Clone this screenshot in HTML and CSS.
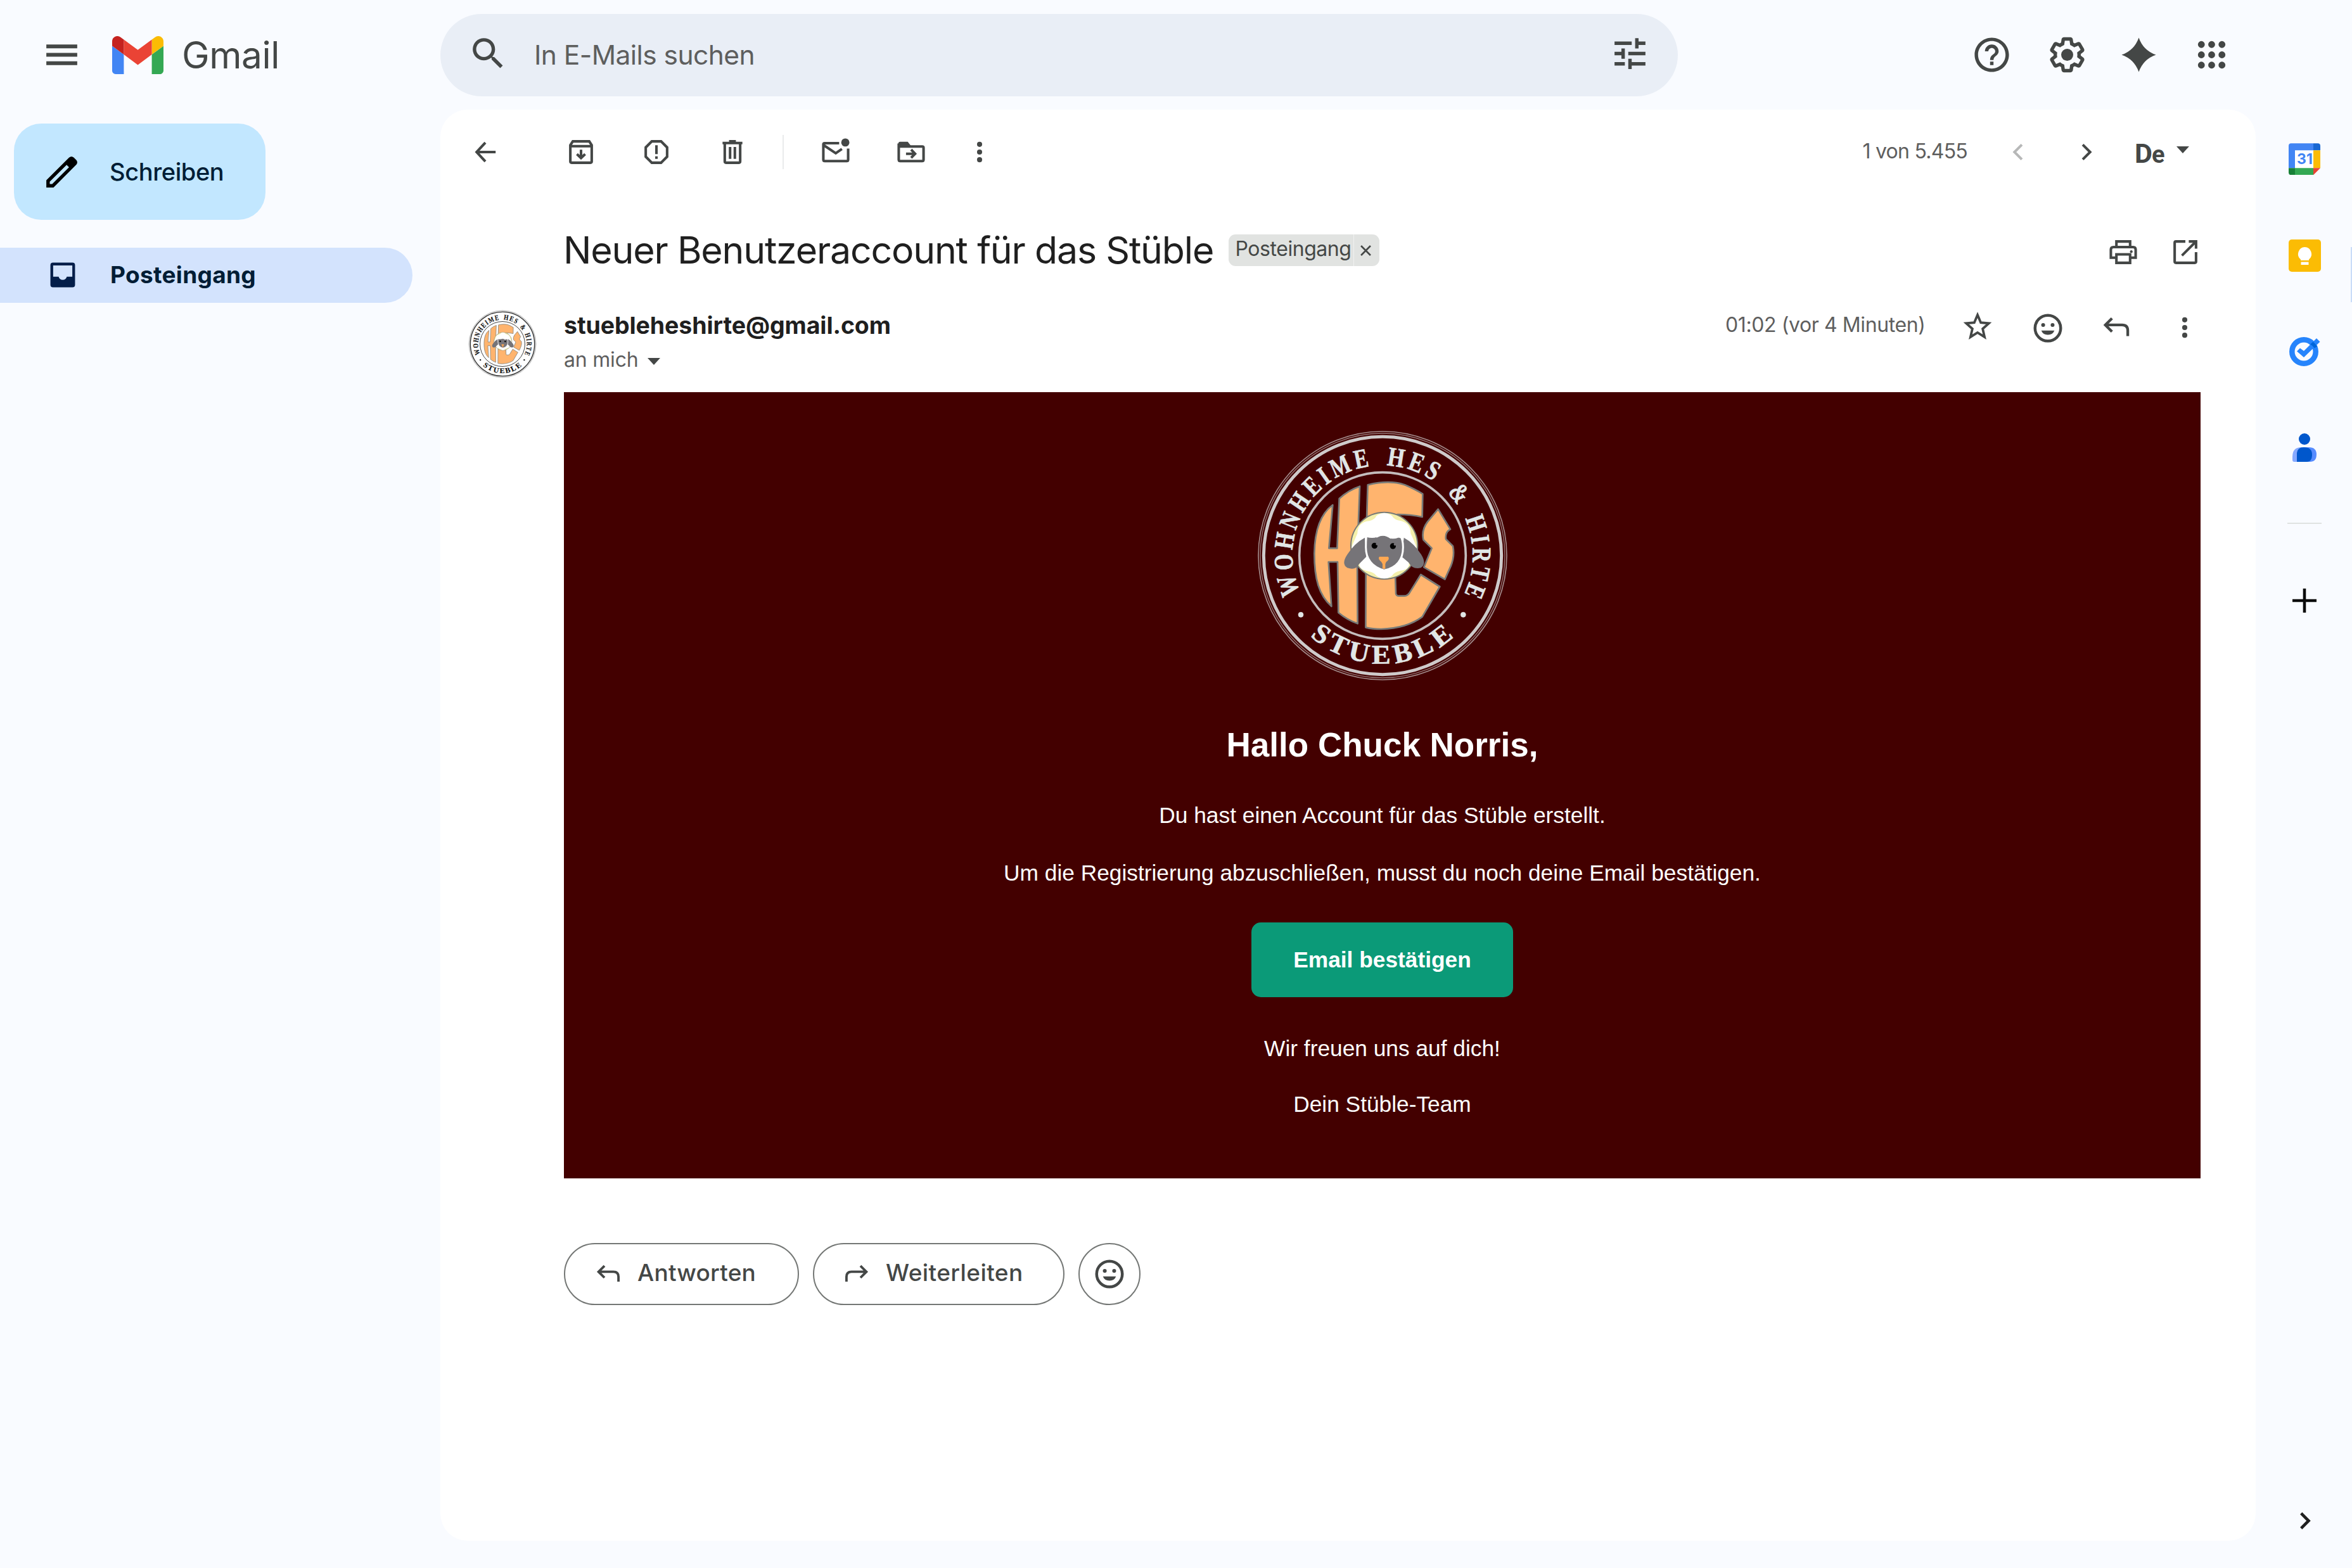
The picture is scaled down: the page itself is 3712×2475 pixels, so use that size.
FILE: index.html
```html
<!DOCTYPE html>
<html lang="de">
<head>
<meta charset="utf-8">
<title>Gmail</title>
<link rel="stylesheet" href="styles.css">
</head>
<body>
<svg class="defs" aria-hidden="true">
  <symbol id="smile" viewBox="0 0 24 24">
    <circle cx="12" cy="12" r="9" fill="none" stroke="currentColor" stroke-width="2"/>
    <circle cx="8.7" cy="9.8" r="1.35"/><circle cx="15.3" cy="9.8" r="1.35"/>
    <path d="M7.4 13.7H16.6A4.9 4.6 0 0 1 7.4 13.7Z"/>
  </symbol>
  <symbol id="reply" viewBox="0 0 20 20">
    <path fill="none" stroke="currentColor" stroke-width="1.6" d="M7.5 4.6L3.6 8.5L7.5 12.4M3.8 8.5H13.4Q16.7 8.5 16.7 11.8V15"/>
  </symbol>
  <symbol id="dots" viewBox="0 0 20 20">
    <circle cx="10" cy="5.5" r="1.5"/><circle cx="10" cy="10" r="1.5"/><circle cx="10" cy="14.5" r="1.5"/>
  </symbol>
</svg>

<div class="app">
  <header class="header">
    <div class="brand">
      <svg class="ic24" viewBox="0 0 24 24"><path d="M3 18h18v-2.2H3zM3 13.1h18v-2.2H3zM3 6v2.2h18V6z"/></svg>
      <svg class="logo" viewBox="52 42 88 66" preserveAspectRatio="none"><path fill="#4285f4" d="M58 108h14V74L52 59v43c0 3.32 2.69 6 6 6"/><path fill="#34a853" d="M120 108h14c3.32 0 6-2.69 6-6V59l-20 15"/><path fill="#fbbc04" d="M120 48v26l20-15v-8c0-7.42-8.47-11.65-14.4-7.2"/><path fill="#ea4335" d="M72 74V48l24 18 24-18v26L96 92"/><path fill="#c5221f" d="M52 51v8l20 15V48l-5.600-4.200c-5.940-4.450-14.400-.22-14.400 7.200"/></svg>
      <span class="brand-name">Gmail</span>
    </div>
    <div class="search">
      <svg class="ic24" viewBox="0 0 24 24"><path d="M15.500 14h-.79l-.28-.27A6.470 6.470 0 0 0 16 9.500 6.500 6.500 0 1 0 9.500 16c1.610 0 3.090-.59 4.230-1.570l.27.28v.79l5 4.990L20.490 19l-4.990-5zm-6 0C7.010 14 5 11.990 5 9.500S7.010 5 9.500 5 14 7.010 14 9.500 11.990 14 9.500 14z"/></svg>
      <span class="search-text">In E-Mails suchen</span>
      <svg class="ic24" viewBox="0 0 24 24"><path d="M3 17v2h6v-2H3zM3 5v2h10V5H3zm10 16v-2h8v-2h-8v-2h-2v6h2zM7 9v2H3v2h4v2h2V9H7zm14 4v-2H11v2h10zm-6-4h2V7h4V5h-4V3h-2v6z"/></svg>
    </div>
    <nav class="header-tools">
      <svg class="ic24" viewBox="0 0 24 24"><path d="M11 18h2v-2h-2v2zm1-16C6.480 2 2 6.480 2 12s4.480 10 10 10 10-4.480 10-10S17.520 2 12 2zm0 18c-4.410 0-8-3.590-8-8s3.590-8 8-8 8 3.590 8 8-3.590 8-8 8zm0-14c-2.210 0-4 1.790-4 4h2c0-1.100.9-2 2-2s2 .9 2 2c0 2-3 1.750-3 5h2c0-2.250 3-2.500 3-5 0-2.210-1.790-4-4-4z"/></svg>
      <svg class="ic24" viewBox="0 0 24 24"><path d="M13.850 22.250h-3.700c-.74 0-1.360-.54-1.450-1.270l-.27-1.890c-.27-.14-.53-.29-.79-.46l-1.800.72c-.7.26-1.470-.03-1.810-.65L2.200 15.530c-.35-.66-.2-1.440.36-1.880l1.530-1.190c-.01-.15-.02-.3-.02-.46 0-.15.01-.31.02-.46l-1.520-1.190c-.59-.45-.74-1.260-.37-1.880l1.850-3.190c.34-.62 1.110-.9 1.790-.63l1.810.73c.26-.17.520-.32.78-.46l.27-1.910c.09-.7.710-1.250 1.440-1.250h3.700c.74 0 1.360.54 1.450 1.270l.27 1.890c.27.14.53.29.79.46l1.800-.72c.71-.26 1.480.03 1.820.65l1.840 3.180c.36.66.2 1.440-.36 1.880l-1.520 1.190c.01.15.02.3.02.46s-.01.31-.02.46l1.520 1.190c.56.45.72 1.230.37 1.860l-1.860 3.220c-.34.62-1.110.9-1.800.63l-1.800-.72c-.26.17-.52.32-.78.46l-.27 1.910c-.1.68-.72 1.220-1.460 1.220zm-3.230-2h2.760l.37-2.550.53-.22c.44-.18.88-.44 1.340-.78l.45-.34 2.380.96 1.380-2.400-2.030-1.580.07-.56c.03-.26.06-.51.06-.78s-.03-.53-.06-.78l-.07-.56 2.030-1.580-1.390-2.400-2.390.96-.45-.35c-.42-.32-.87-.58-1.330-.77l-.52-.22-.37-2.550h-2.760l-.37 2.550-.53.21c-.44.19-.88.44-1.340.79l-.45.33-2.380-.95-1.390 2.390 2.030 1.580-.07.56a7 7 0 0 0-.06.79c0 .26.02.53.06.78l.07.56-2.030 1.580 1.380 2.400 2.390-.96.45.35c.43.33.86.58 1.330.77l.53.22.38 2.550z"/><circle cx="12" cy="12" r="3.500"/></svg>
      <svg class="ic24" viewBox="0 0 24 24"><path d="M12 2Q14.600 9.400 22 12Q14.600 14.600 12 22Q9.400 14.600 2 12Q9.400 9.400 12 2Z"/></svg>
      <svg class="ic24" viewBox="0 0 24 24"><path d="M6 8a2 2 0 1 0 0-4 2 2 0 0 0 0 4zm6 0a2 2 0 1 0 0-4 2 2 0 0 0 0 4zm6 0a2 2 0 1 0 0-4 2 2 0 0 0 0 4zM6 14a2 2 0 1 0 0-4 2 2 0 0 0 0 4zm6 0a2 2 0 1 0 0-4 2 2 0 0 0 0 4zm6 0a2 2 0 1 0 0-4 2 2 0 0 0 0 4zM6 20a2 2 0 1 0 0-4 2 2 0 0 0 0 4zm6 0a2 2 0 1 0 0-4 2 2 0 0 0 0 4zm6 0a2 2 0 1 0 0-4 2 2 0 0 0 0 4z"/></svg>
    </nav>
  </header>

  <aside class="sidebar">
    <button class="compose">
      <svg class="ic24" viewBox="0 0 24 24"><path d="M20.410 4.940l-1.350-1.350c-.78-.78-2.050-.78-2.830 0L3 16.820V21h4.180L20.410 7.770c.79-.78.79-2.050 0-2.830zm-14 14.120L5 19v-1.360l9.820-9.820 1.410 1.410-9.820 9.830z"/></svg>
      <span>Schreiben</span>
    </button>
    <a class="folder">
      <svg class="ic20" viewBox="0 0 20 20"><path fill-rule="evenodd" d="M4.300 2.800H15.700Q17.200 2.800 17.200 4.300V15.700Q17.200 17.200 15.700 17.200H4.300Q2.800 17.200 2.800 15.700V4.300Q2.800 2.800 4.300 2.800ZM4.400 4.400V11H7.600Q8.200 12.900 10 12.900T12.400 11H15.600V4.400Z"/></svg>
      <span>Posteingang</span>
    </a>
  </aside>

  <main class="card">
    <div class="toolbar">
      <svg class="ic20 t-back" viewBox="0 0 20 20"><path fill="none" stroke="currentColor" stroke-width="1.500" d="M10 4.500L4.900 10L10 15.500M5 10H16"/></svg>
      <svg class="ic20 t-archive" viewBox="0 0 20 20"><path fill="none" stroke="currentColor" stroke-width="1.500" d="M3.750 6L5.200 3.750H14.800L16.250 6V15.500Q16.250 16.250 15.500 16.250H4.500Q3.750 16.250 3.750 15.500ZM3.750 6.600H16.250M10 8.600V13.300M7.600 11.200L10 13.500L12.400 11.200"/></svg>
      <svg class="ic20 t-spam" viewBox="0 0 20 20"><path fill="none" stroke="currentColor" stroke-width="1.500" d="M7.300 3.750H12.700L16.250 7.300V12.700L12.700 16.250H7.300L3.750 12.700V7.300ZM10 6V11.200M10 12.500V14"/></svg>
      <svg class="ic20 t-trash" viewBox="0 0 20 20"><path fill="none" stroke="currentColor" stroke-width="1.500" d="M4.200 4.750H15.800M8 3.750H12M5.500 5V15.500Q5.500 16.250 6.200 16.250H13.800Q14.500 16.250 14.500 15.500V5M8.600 7V14M11.400 7V14"/></svg>
      <i class="divider"></i>
      <svg class="ic20 t-unread" viewBox="0 0 20 20"><path fill="none" stroke="currentColor" stroke-width="1.500" d="M12 4.800H3.500Q2.750 4.800 2.750 5.500V14.500Q2.750 15.250 3.500 15.250H16.500Q17.250 15.250 17.250 14.500V8M3 6L10 10.700L13.600 8.200"/><circle cx="15.600" cy="4.400" r="2.400"/></svg>
      <svg class="ic20 t-move" viewBox="0 0 20 20"><path fill="none" stroke="currentColor" stroke-width="1.500" d="M2.750 5V14.500Q2.750 15.250 3.500 15.250H16.500Q17.250 15.250 17.250 14.500V7.500Q17.250 6.750 16.500 6.750H3M7 11H12M10 8.600L12.300 11L10 13.400"/><path d="M2.500 4.800Q2.700 4 3.500 4H8L10 6.500V7H2.500Z"/></svg>
      <svg class="ic20 t-more"><use href="#dots"/></svg>
      <span class="count">1 von 5.455</span>
      <svg class="ic20 t-prev" viewBox="0 0 20 20"><path fill="none" stroke="currentColor" stroke-width="1.500" d="M12.200 5.700L7.900 10L12.200 14.300"/></svg>
      <svg class="ic20 t-next" viewBox="0 0 20 20"><path fill="none" stroke="currentColor" stroke-width="1.500" d="M7.800 5.700L12.100 10L7.800 14.300"/></svg>
      <span class="lang">D<small>e</small></span>
      <i class="caret t-caret"></i>
    </div>

    <div class="subject-row">
      <h1 class="subject">Neuer Benutzeraccount für das Stüble</h1>
      <span class="chip"><span class="chip-name">Posteingang</span><svg class="chip-x" viewBox="0 0 16 16"><path fill="none" stroke="currentColor" stroke-width="2.500" d="M1 1L15 15M15 1L1 15"/></svg></span>
      <svg class="ic20 t-print" viewBox="0 0 20 20"><path fill="none" stroke="currentColor" stroke-width="1.500" d="M6 6.800V3.750H14V6.800M5.600 13.250H2.750V8.500Q2.750 7 4.250 7H15.750Q17.250 7 17.250 8.500V13.250H14.400M6 11.300H14V16.250H6Z"/><circle cx="14.700" cy="9.700" r=".8"/></svg>
      <svg class="ic20 t-open" viewBox="0 0 20 20"><path fill="none" stroke="currentColor" stroke-width="1.500" d="M10 3.750H4.500Q3.750 3.750 3.750 4.500V15.500Q3.750 16.250 4.500 16.250H15.500Q16.250 16.250 16.250 15.500V10M12 3.750H16.250V8M16 4L8 12"/></svg>
    </div>

    <div class="sender-row">
      <svg class="avatar" viewBox="67 50 1200 1200"><use href="#seal"/></svg>
      <div class="sender">
        <div class="from">stuebleheshirte@gmail.com</div>
        <div class="to"><span>an mich</span><i class="caret"></i></div>
      </div>
      <span class="time">01:02 (vor 4 Minuten)</span>
      <svg class="ic20 t-star" viewBox="0 0 20 20"><path fill="none" stroke="currentColor" stroke-width="1.400" stroke-linejoin="miter" d="M10 3L11.900 7.500L16.600 7.900L13 11.100L14.100 15.900L10 13.300L5.900 15.900L7 11.100L3.400 7.900L8.100 7.500Z"/></svg>
      <svg class="ic20 t-smile"><use href="#smile"/></svg>
      <svg class="ic20 t-reply"><use href="#reply"/></svg>
      <svg class="ic20 t-dots"><use href="#dots"/></svg>
    </div>

    <article class="mail">
      <svg class="mail-logo" viewBox="67 50 1200 1200">
        <g id="seal">
          <path id="ring-top" d="M667 1077A427 427 0 0 1 667 223A427 427 0 0 1 667 1077" fill="none"/>
          <path id="ring-bottom" d="M155 650A512 512 0 0 0 1179 650" fill="none"/>
          <g fill="none" stroke="currentColor">
            <circle cx="667" cy="650" r="588" stroke-width="5" opacity=".6"/>
            <circle cx="667" cy="650" r="579" stroke-width="4" opacity=".5"/>
            <circle cx="667" cy="650" r="563" stroke-width="15" opacity=".88"/>
            <circle cx="667" cy="650" r="394" stroke-width="11" opacity=".82"/>
          </g>
          <g class="seal-text" fill="currentColor">
            <text textLength="807" lengthAdjust="spacingAndGlyphs"><textPath href="#ring-top" startOffset="488">WOHNHEIME</textPath></text>
            <text textLength="254" lengthAdjust="spacingAndGlyphs"><textPath href="#ring-top" startOffset="1359">HES</textPath></text>
            <text textLength="95" lengthAdjust="spacingAndGlyphs"><textPath href="#ring-top" startOffset="1680">&amp;</textPath></text>
            <text textLength="384" lengthAdjust="spacingAndGlyphs"><textPath href="#ring-top" startOffset="1830">HIRTE</textPath></text>
            <text textLength="766" lengthAdjust="spacingAndGlyphs"><textPath href="#ring-bottom" startOffset="429">STUEBLE</textPath></text>
            <circle cx="280" cy="930" r="12"/><circle cx="1049" cy="930" r="12"/>
          </g>
          <g fill="#ffb46e" stroke="#777a78" stroke-width="8" stroke-linejoin="round">
            <path d="M431 410C376 450 346 520 344 640C344 760 366 838 425 890L411 680H454L458 920Q500 955 549 972L547 650L559 322Q505 340 462 380L452 615H413Z"/>
            <path d="M597 315Q700 290 772 315Q820 335 857 358L855 467Q800 455 740 455L592 475Z"/>
            <path d="M588 735H727L730 830Q732 841 745 841H770Q788 840 797 822L848 740L938 797L855 940Q780 995 660 998Q620 998 587 990Z"/>
            <path d="M930 430L988 525Q962 540 967 572L1000 605Q1010 650 990 700L962 762L863 705L900 615L860 575Q850 530 880 490Z"/>
          </g>
          <circle cx="675" cy="603" r="158" fill="#f4f0ab" stroke="#777a78" stroke-width="6"/>
          <path fill="#fff" d="M520 610Q535 575 548 545Q550 490 605 486Q630 480 638 462Q675 435 712 462Q722 482 755 486Q800 498 800 545Q815 575 828 610L790 680Q800 715 750 722Q722 728 712 745Q675 772 638 745Q625 728 600 724Q548 715 560 680Z"/>
          <path fill="#767478" d="M583 565Q535 590 500 645Q470 690 500 708Q540 722 556 690L590 655ZM768 565Q815 590 850 645Q878 690 848 708Q810 718 790 682L758 655Z"/>
          <path fill="#767478" stroke="#fff" stroke-width="9" d="M590 560Q615 545 640 560Q672 540 705 564Q735 570 750 552Q764 575 764 610Q764 700 675 720Q588 695 588 610Q588 580 590 560Z"/>
          <path fill="#fff" d="M585 545L600 540Q625 555 640 552Q675 540 705 562Q735 570 752 540L765 545L755 568Q735 560 705 570Q672 546 640 562Q620 570 590 562Z"/>
          <circle cx="629" cy="603" r="14" fill="#000"/><circle cx="716" cy="605" r="14" fill="#000"/>
          <circle cx="641" cy="595" r="6" fill="#767478"/><circle cx="726" cy="597" r="6" fill="#767478"/>
          <path fill="#ffa852" d="M652 655H694Q702 668 684 680L680 690V712H667V690Q664 680 655 674Q645 662 652 655Z"/>
        </g>
      </svg>
      <h2>Hallo Chuck Norris,</h2>
      <p>Du hast einen Account für das Stüble erstellt.</p>
      <p>Um die Registrierung abzuschließen, musst du noch deine Email bestätigen.</p>
      <a class="confirm">Email bestätigen</a>
      <p>Wir freuen uns auf dich!</p>
      <p>Dein Stüble-Team</p>
    </article>

    <div class="actions">
      <button class="pill pill-reply"><svg class="ic-act"><use href="#reply"/></svg><span>Antworten</span></button>
      <button class="pill pill-forward"><svg class="ic-act flip"><use href="#reply"/></svg><span>Weiterleiten</span></button>
      <button class="pill pill-smile"><svg class="ic20"><use href="#smile"/></svg></button>
    </div>
  </main>

  <aside class="rail">
    <svg class="r-cal" viewBox="0 0 50 50"><path fill="#fff" d="M9 9H41V41H9Z"/><path fill="#4285f4" d="M4 0H39V11H10V39H0V4Q0 0 4 0Z"/><path fill="#1967d2" d="M39 0H46Q50 0 50 4V11H39Z"/><path fill="#fbbc04" d="M39 11H50V39H39Z"/><path fill="#34a853" d="M10 39H39V50H10Z"/><path fill="#188038" d="M0 39H10V50H4Q0 50 0 46Z"/><path fill="#ea4335" d="M39 39H50L39 50Z"/><text x="25.500" y="33" text-anchor="middle">31</text></svg>
    <svg class="r-keep" viewBox="0 0 51 51"><rect width="51" height="51" rx="5" fill="#fbbc04"/><path fill="#fff" d="M25.500 12A11 11 0 0 1 32 31.500V33H19V31.500A11 11 0 0 1 25.500 12ZM19.500 35.500H31.500V40H19.500Z"/></svg>
    <svg class="r-tasks" viewBox="0 0 50 46"><circle cx="23" cy="23" r="18.700" fill="none" stroke="#2684fc" stroke-width="8.500"/><path fill="#2684fc" d="M12 22.500L17 17.500L23 22L43 2L48.500 7.500L23 32Z"/><path fill="#0066da" d="M33 11.500L37.500 7.500Q42 11 44 15L39.500 17.500Q37 13.500 33 11.500Z"/></svg>
    <svg class="r-people" viewBox="0 0 38 45"><path fill="#86a9ff" d="M0 45V37Q0 22 14 22H22V45H3Q0 45 0 42Z"/><path fill="#578cff" d="M16 22H26Q38 22 38 33.500T27 45H16Z"/><path fill="#0057cc" d="M7 45V31Q8 22 18 22Q31 22 31 33.500T22 45Z"/><circle cx="19" cy="9" r="9" fill="#0057cc"/></svg>
    <i class="r-line"></i>
    <svg class="r-plus" viewBox="0 0 38 38"><path stroke="#0b0b0b" stroke-width="4.600" d="M19 0V38M0 19H38"/></svg>
    <svg class="r-chevron" viewBox="0 0 17 27"><path fill="none" stroke="#1f1f1f" stroke-width="4.600" d="M1.700 1.700L13.500 13.500L1.700 25.300"/></svg>
    <i class="edge"></i>
  </aside>
</div>
</body>
</html>
```
FILE: styles.css
```css
* { box-sizing: border-box; }
body {
  margin: 0;
  background: #f9fbff;
  color: #444746;
  font-family: Inter, "Open Sans", sans-serif;
  white-space: nowrap;
}
svg { display: block; flex: none; fill: currentColor; }
i { display: block; flex: none; }
button { font: inherit; color: inherit; border: 0; background: none; padding: 0; }
.defs { position: absolute; width: 0; height: 0; }
.ic24 { width: 65px; height: 65px; }
.ic20 { width: 54px; height: 54px; }
.caret {
  width: 20px; height: 11px;
  background: #444746;
  clip-path: polygon(0 0, 100% 0, 50% 100%);
}

.app {
  display: grid;
  grid-template: 173px 1fr / 694.500px 2865.500px 152px;
  width: 3712px;
  height: 2475px;
  overflow: hidden;
}

/* Header */
.header { grid-column: 1 / -1; display: flex; align-items: center; }
.brand { display: flex; align-items: center; width: 694.500px; padding-left: 65px; }
.logo { width: 81px; height: 60px; margin-left: 47px; }
.brand-name { margin-left: 29px; font-size: 58.500px; line-height: 76px; letter-spacing: -.4px; }
.search {
  display: flex; align-items: center;
  width: 1953.500px; height: 130px;
  padding: 0 43px 4px 43.500px;
  border-radius: 65px;
  background: #e9eef6;
}
.search-text { margin: 3px auto 0 40px; font-size: 42.500px; letter-spacing: -.57px; color: #5e5e5e; }
.header-tools { display: flex; margin-left: 462.500px; }
.header-tools .ic24:nth-child(2) { margin-left: 54.600px; }
.header-tools .ic24:nth-child(3) { margin-left: 47.800px; }
.header-tools .ic24:nth-child(4) { margin-left: 50.200px; }

/* Sidebar */
.compose {
  display: flex; align-items: center;
  width: 397px; height: 152px;
  margin: 22px 0 0 22px;
  padding-left: 43px;
  border-radius: 43px;
  background: #c2e7ff;
  color: #001d35;
  font-size: 38px;
  font-weight: 500;
  letter-spacing: -.4px;
}
.compose svg { color: #000; }
.compose span { margin-left: 43px; line-height: 54px; }
.folder {
  display: flex; align-items: center;
  width: 651px; height: 87px;
  margin-top: 43.500px;
  padding-left: 72px;
  border-radius: 0 43.500px 43.500px 0;
  background: #d3e3fd;
  color: #041e49;
  font-size: 37px;
  font-weight: 700;
  letter-spacing: .3px;
}
.folder span { margin-left: 48px; line-height: 54px; color: #001d35; }

/* Message card */
.card {
  height: 2258.700px;
  border-radius: 43px;
  background: #fff;
}
.toolbar { display: flex; align-items: center; height: 133px; padding-left: 44px; }
.t-archive { margin-left: 97.500px; }
.t-spam { margin-left: 65.300px; }
.t-trash { margin-left: 65.700px; }
.divider { width: 2.700px; height: 54px; margin: 0 54.400px 0 51.600px; background: #e9ebec; }
.t-move { margin-left: 65.300px; }
.t-more { margin-left: 54.500px; }
.count { width: 166px; margin: -2px 0 0 1366px; font-size: 32px; letter-spacing: -.75px; color: #5e5e5e; }
.t-prev { margin-left: 53px; color: #b7b8b8; }
.t-next { margin-left: 53.500px; }
.lang { width: 48px; margin: 7px 0 0 49px; font: 700 43px/50px Roboto, sans-serif; letter-spacing: -1px; }
.lang small { font-size: 38px; }
.t-caret { margin: -6px 0 0 18px; }

.subject-row { display: flex; align-items: center; height: 184px; padding: 0 0 6px 194.500px; }
.subject { width: 1049.500px; margin: 0; font-size: 59px; font-weight: 400; line-height: 76px; letter-spacing: -1.170px; color: #1f1f1f; }
.chip {
  display: flex; align-items: center;
  width: 238.500px; height: 50px;
  border-radius: 11px;
  background: #e1e3e1;
  font-size: 32px;
  letter-spacing: -.45px;
}
.chip-name { width: 198px; height: 50px; padding-left: 11px; line-height: 46px; border-right: 1.500px solid #f0f1f0; }
.chip-x { width: 17px; height: 17px; margin-left: 10px; }
.t-print { margin: 5px 0 0 1146.500px; }
.t-open { margin: 5px 0 0 44.500px; }

.sender-row { display: flex; height: 128.700px; padding-left: 44.500px; }
.avatar { width: 108px; height: 108px; margin-top: -1px; color: #111; }
.sender { width: 1876px; padding-left: 43px; }
.from { height: 48px; line-height: 48px; font-size: 37.500px; font-weight: 700; letter-spacing: -.1px; color: #1f1f1f; }
.to { display: flex; align-items: center; height: 58px; font-size: 32px; letter-spacing: -.2px; color: #5e5e5e; }
.to .caret { margin: 7px 0 0 14.500px; }
.time { width: 370.500px; line-height: 46px; font-size: 32px; letter-spacing: -.4px; color: #5e5e5e; }
.t-star { margin-top: -1px; }
.t-smile { margin: .5px 0 0 57px; }
.t-reply { margin: 0 0 0 54px; }
.t-dots { margin: 0 0 0 54px; }

/* Mail content */
.mail {
  display: flex; flex-direction: column; align-items: center;
  width: 2583px; height: 1241.600px;
  margin-left: 195.500px;
  padding-top: 58px;
  background: #430000;
  color: #fff;
  font-family: "Liberation Sans", Arial, sans-serif;
  font-size: 35.300px;
}
.mail-logo { width: 400px; height: 400px; color: #e1e6e6; }
.seal-text { font: 700 128px "Liberation Serif", serif; letter-spacing: 20px; stroke: currentColor; stroke-width: 2px; }
.mail h2 { margin: 67.500px 0 0; font-size: 53px; line-height: 64px; }
.mail p { margin: 48.700px 0 0; line-height: 42px; }
.mail h2 + p { margin-top: 58px; }
.confirm {
  display: flex; align-items: center; justify-content: center;
  width: 413px; height: 117.500px;
  margin-top: 57.500px;
  border-radius: 15px;
  background: #0b9a78;
  font-weight: 700;
}
.mail .confirm + p { margin-top: 60px; }
.mail p:last-child { margin-top: 46.500px; }

/* Reply actions */
.actions { display: flex; gap: 22px; margin: 102px 0 0 195.500px; }
.pill {
  display: flex; align-items: center;
  height: 97.700px;
  border: 2.500px solid #747775;
  border-radius: 49px;
  font-size: 37px;
  font-weight: 500;
  letter-spacing: .2px;
}
.ic-act { width: 48px; height: 48px; }
.flip { transform: scaleX(-1); }
.pill-reply { width: 371px; padding-left: 44px; }
.pill-forward { width: 397px; padding-left: 43px; letter-spacing: .4px; }
.pill span { margin: -5px 0 0 22px; line-height: 50px; }
.pill-smile { width: 97.700px; justify-content: center; }

/* Right rail */
.rail { position: relative; display: flex; flex-direction: column; align-items: center; padding: 52.500px 0 0 2px; }
.r-cal { width: 50px; height: 50.500px; }
.r-cal text { font: 700 23px Inter, sans-serif; fill: #4285f4; }
.r-keep { width: 51px; height: 51px; margin-top: 101.500px; }
.r-tasks { width: 50px; height: 46px; margin: 103px 0 0 2px; }
.r-people { width: 38px; height: 45px; margin-top: 106px; }
.r-line { width: 54.500px; height: 2.700px; margin-top: 96px; background: #e0e3e1; }
.r-plus { width: 38px; height: 38px; margin-top: 101.500px; }
.r-chevron { width: 17px; height: 27px; margin: 1420px 0 0 2px; }
.edge { position: absolute; right: 0; top: 217px; width: 2px; height: 87px; background: #c9dcf8; }
```
